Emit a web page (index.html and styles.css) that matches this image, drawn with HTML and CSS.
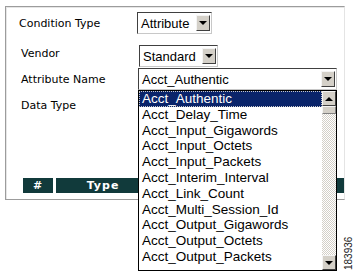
FILE: index.html
```html
<!DOCTYPE html>
<html lang="en">
<head>
    <meta charset="UTF-8">
    <title>Condition</title>
    <link rel="stylesheet" href="styles.css">
</head>
<body>
    <div class="panel">
        <div class="row row-cond">
            <span class="label">Condition Type</span>
            <div class="select sel-cond"><span class="val">Attribute</span><span class="btn-arrow down"></span></div>
        </div>
        <div class="row row-vendor">
            <span class="label label-up">Vendor</span>
            <div class="select sel-vendor"><span class="val">Standard</span><span class="btn-arrow down"></span></div>
        </div>
        <div class="row row-attr">
            <span class="label">Attribute Name</span>
            <div class="combo">
                <div class="select sel-attr"><span class="val">Acct_Authentic</span><span class="btn-arrow down"></span></div>
                <!-- open dropdown list -->
                <div class="list">
                    <ul class="items">
                        <li class="selected">Acct_Authentic</li>
                        <li>Acct_Delay_Time</li>
                        <li>Acct_Input_Gigawords</li>
                        <li>Acct_Input_Octets</li>
                        <li>Acct_Input_Packets</li>
                        <li>Acct_Interim_Interval</li>
                        <li>Acct_Link_Count</li>
                        <li>Acct_Multi_Session_Id</li>
                        <li>Acct_Output_Gigawords</li>
                        <li>Acct_Output_Octets</li>
                        <li>Acct_Output_Packets</li>
                    </ul>
                    <div class="scrollbar">
                        <span class="btn-arrow up"></span>
                        <span class="thumb"></span>
                        <span class="track"></span>
                        <span class="btn-arrow down"></span>
                    </div>
                </div>
            </div>
        </div>
        <div class="row row-data">
            <span class="label">Data Type</span>
        </div>
        <div class="table-head">
            <div class="th th-num">#</div>
            <div class="th th-type">Type</div>
            <div class="th th-rest"></div>
        </div>
    </div>
    <div class="figno">183936</div>
</body>
</html>
```

FILE: styles.css
```css
html, body {
    min-height: 274px;
}
body {
    margin: 0;
    background-color: #fff;
    font-family: "DejaVu Sans", Verdana, sans-serif;
    font-size: 11px;
    color: #000;
}
.panel {
    margin: 6px 0 0 5px;
    width: 340px;
    box-sizing: border-box;
    border: 1px solid #9c9c9c;
    border-right-color: #e4e4e4;
    box-shadow: inset 1px 1px 0 #e6e6e6;
    padding: 5px 0 6px 13px;
}
.row {
    display: flex;
    align-items: center;
    height: 22px;
}
.label {
    width: 118px;
}
.row-vendor {
    margin-top: 11px;
    padding-left: 2px;
}
.label-up {
    margin-top: -6px;
}
.row-attr {
    margin-top: 1px;
    padding-left: 2px;
}
.row-attr .label {
    width: 117px;
}
.row-data {
    padding-left: 2px;
    height: 30px;
}
.select {
    display: flex;
    align-items: center;
    height: 22px;
    box-sizing: border-box;
    border: 1px solid;
    border-color: #404040 #c8c8c8 #c8c8c8 #404040;
    background-color: #fff;
    padding: 0 1px 0 3px;
    font-family: "Liberation Sans", Arial, sans-serif;
    font-size: 13px;
}
.select .val {
    flex: 1;
}
.sel-cond {
    width: 75px;
}
.sel-vendor {
    width: 79px;
}
.combo {
    position: relative;
}
.sel-attr {
    width: 199px;
}
.btn-arrow {
    display: flex;
    align-items: center;
    justify-content: center;
    width: 14px;
    height: 16px;
    box-sizing: border-box;
    background-color: #d4d0c8;
    border: 1px solid;
    border-color: #f4f4f4 #404040 #404040 #f4f4f4;
}
.btn-arrow::after {
    content: "";
    border-left: 4px solid transparent;
    border-right: 4px solid transparent;
}
.btn-arrow.down::after {
    border-top: 4px solid #000;
}
.btn-arrow.up::after {
    border-bottom: 4px solid #000;
}
/* open dropdown */
.list {
    position: absolute;
    left: 0;
    top: 22px;
    width: 199px;
    height: 181px;
    box-sizing: border-box;
    border: 1px solid #000;
    background-color: #fff;
    display: flex;
    z-index: 2;
}
.items {
    list-style: none;
    margin: 0;
    padding: 0;
    flex: 1;
    font-family: "Liberation Sans", Arial, sans-serif;
    font-size: 13.5px;
}
.items li {
    height: 15.8px;
    line-height: 15px;
    padding-left: 3px;
    box-sizing: border-box;
    white-space: nowrap;
}
.items li.selected {
    background-color: #0a246a;
    color: #fff;
    outline: 1px dotted #c8c8c8;
    outline-offset: -1px;
}
.scrollbar {
    width: 14px;
    display: flex;
    flex-direction: column;
    background: repeating-conic-gradient(#d4d0c8 0 25%, #fff 0 50%) 0 0 / 2px 2px;
}
.scrollbar .btn-arrow {
    height: 15px;
}
.thumb {
    height: 8px;
    box-sizing: border-box;
    background-color: #d4d0c8;
    border: 1px solid;
    border-color: #f4f4f4 #808080 #808080 #f4f4f4;
}
.track {
    flex: 1;
}
.table-head {
    display: flex;
    gap: 3px;
    margin: 58px 0 0 4px;
    height: 15px;
}
.th {
    background-color: #113a3b;
    color: #fff;
    font-weight: bold;
    font-size: 11px;
    line-height: 15px;
    text-align: center;
    letter-spacing: 1px;
}
.th-num {
    width: 30px;
}
.th-type {
    width: 94px;
}
.th-rest {
    flex: 1;
}
.figno {
    position: absolute;
    left: 343px;
    top: 270px;
    font-family: "Liberation Sans", Arial, sans-serif;
    font-size: 10px;
    line-height: 11px;
    transform: rotate(-90deg);
    transform-origin: 0 0;
    color: #222;
}
```
